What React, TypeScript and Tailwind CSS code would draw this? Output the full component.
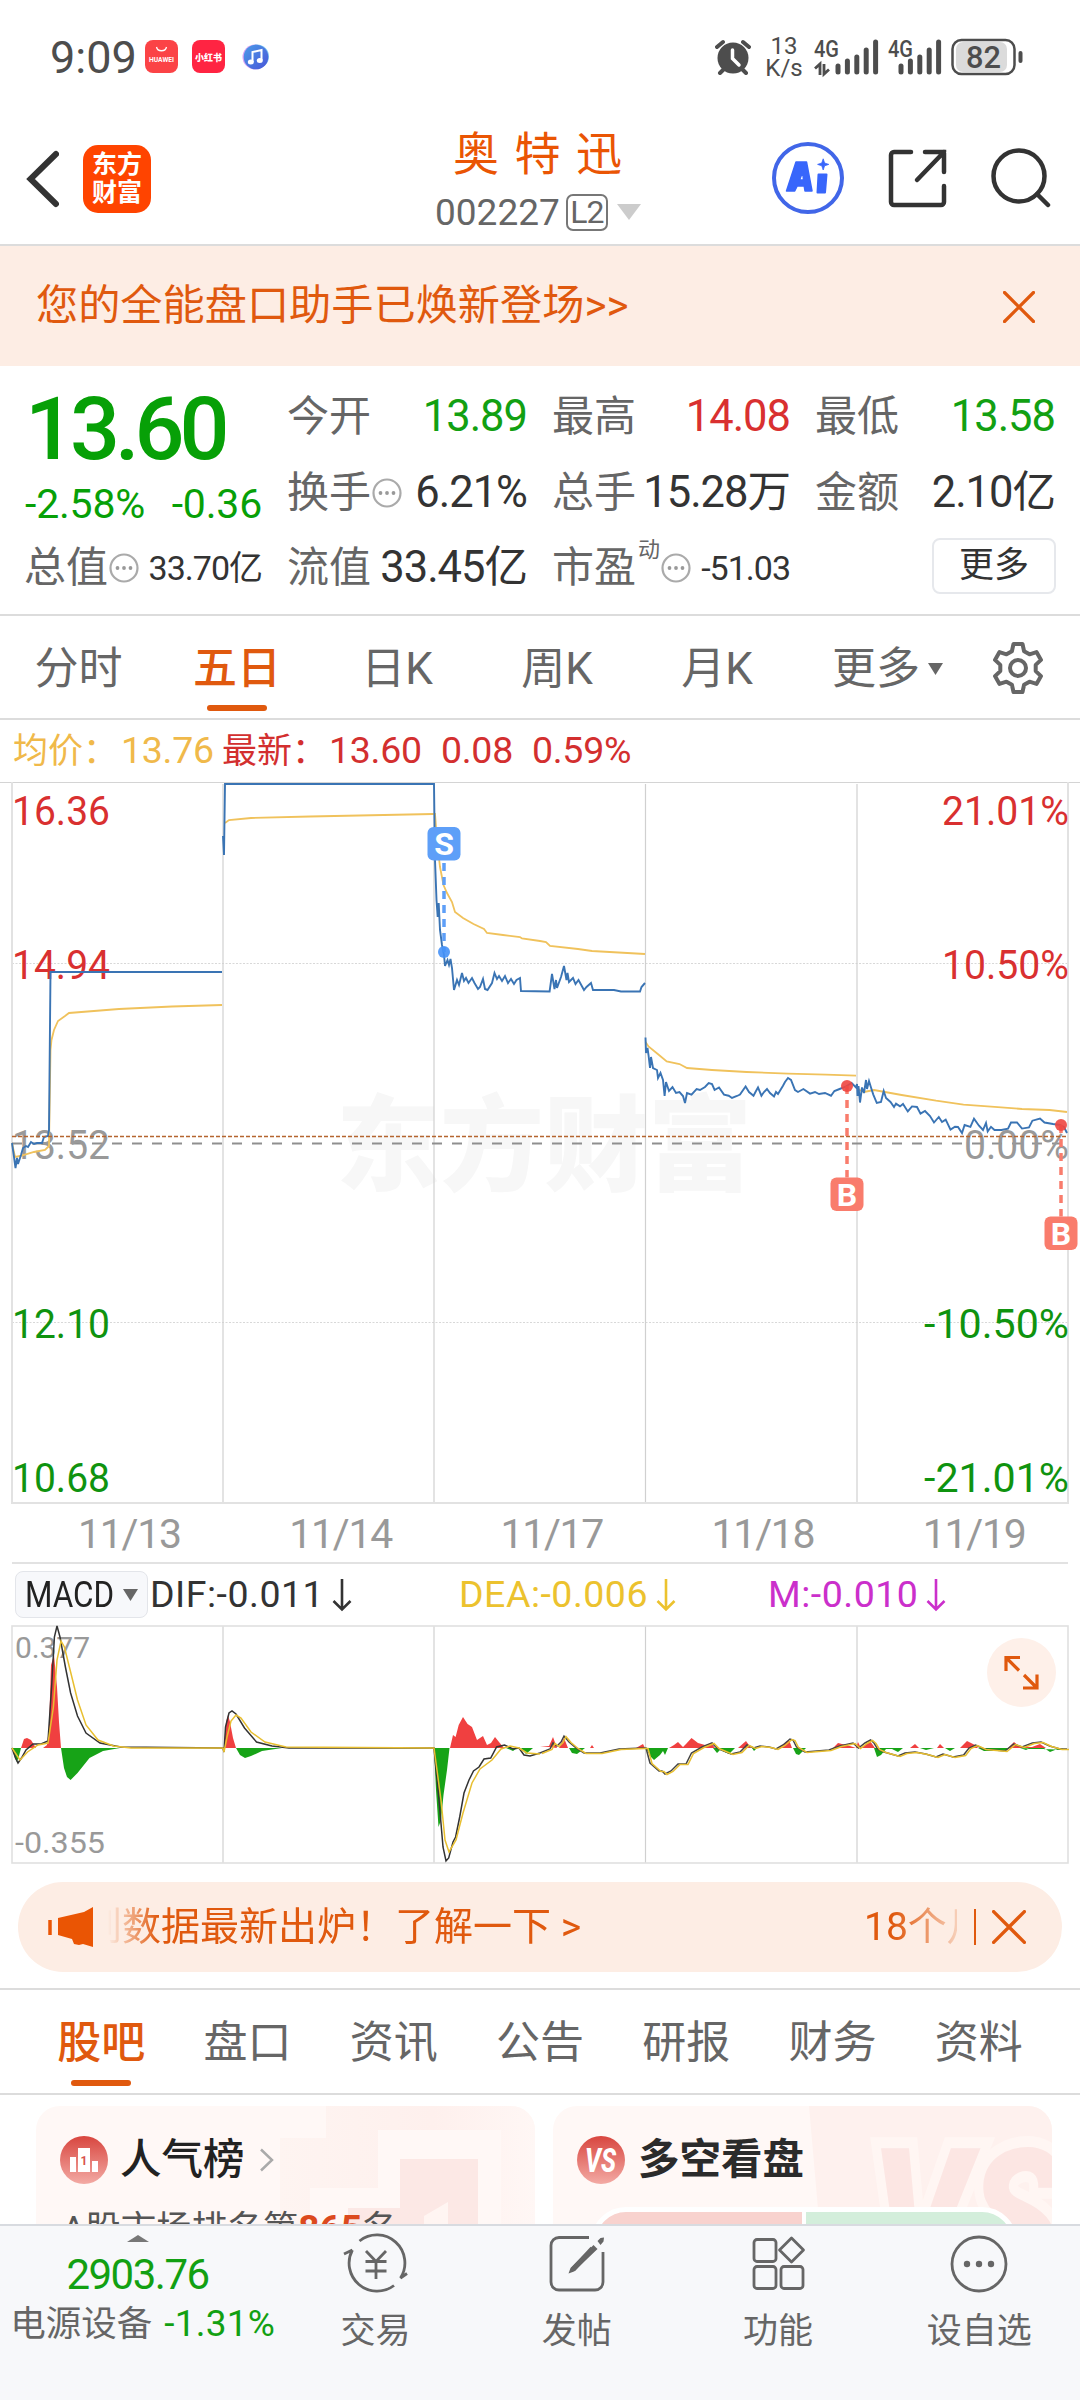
import type { ReactNode } from 'react';
import clsx from 'clsx';

const DAYS = ['11/13', '11/14', '11/17', '11/18', '11/19'];
const GRID_X = [223, 434, 645.5, 857];

const PRICE = [
  '12,1143 14,1157 15.5,1168 17,1158 18,1164 21,1155 23,1148 26,1146 28,1147 31,1142 34,1144 37,1143 42,1143 44,1137 48,1136 49,1130 50.5,972 222,972',
  '223,836 224,855 225,784 434,784 435,860 436.5,900 437.7,917 438.7,903 440,930 442,945 444,955 445,966 447.5,960 449,965 450.5,959 452,968 454,990 457,980 459,985 462,973 464,981 466,978 468.5,983 472,978 474.5,983 478,989 480,987 483,979 485,989 487.5,990 492,983 494.5,973 497,979 499,976 502,981 505,976 508,983 511,979 514,984 516.5,980 520,978 521,991 549.6,991.5 552,974 554.5,989 556,980 557,988 561,977 564,966 566.5,980 567.5,973 569,982 573,978 575.5,984 578.5,980 584,990 586.5,987 591,983 593,990 602,990 614,990 621,991.5 640,991.5 641.5,987 645,983',
  '645.5,1037.5 646,1053 647.5,1048 648.5,1055 650,1068 651,1057 653,1068 657,1070 658,1078 660.5,1073 663,1080 664.6,1096 666,1082 669,1091 672.5,1087 676,1093 679.5,1092 683,1096 685,1103 687,1093 691.5,1094.6 696.6,1089 700,1090 705,1087 708.7,1083 712,1084 714.6,1090 719,1087.5 724,1094.6 728.7,1095.7 732,1098 737,1096 740,1094.6 745.6,1086.4 749,1092 753.5,1095.7 756,1091 758,1087.5 761.4,1095.7 764,1092 767,1089 770,1093 774,1096.4 776,1092 778,1094 783,1085.7 785,1082 788,1078 791,1080 795,1090 798,1092 803.4,1089 810,1093.6 815,1092 819,1094 825,1093 831,1095.7 834.4,1091 839.6,1089 845,1087 851.6,1083 856,1087.5 857,1084 857.5,1096 858.5,1086 860,1102.5 862,1087.5 864,1093 866,1080 867,1089 869,1081 871,1087.5 873.3,1094.6 876.8,1103 881,1102 883.7,1091 886,1098 890.5,1102 894,1107 896,1103.6 900,1106.4 903,1104 907.8,1111.4 912,1106.4 917,1107 920.5,1113.6 925,1111 930,1116 934,1122.5 938.8,1117 942,1122 945.7,1119.6 950.5,1129.6 955,1126.8 958,1127 962,1133 964.6,1125 970.4,1126.8 974,1118.6 979,1125.7 983,1130 986,1123 987.7,1131.4 991,1126.8 994.5,1130 1001.4,1130 1008,1128.6 1011,1122.5 1017,1122.5 1022,1128.6 1029,1127.5 1032.4,1120.7 1040,1118.6 1044.5,1122.5 1053,1124 1060,1125 1064,1127 1067,1133',
];

const AVERAGE = [
  '12,1143 15,1157 20,1156 34,1152 45,1150 49,1146 50.5,1050 51.5,1040 54,1030 58,1021 65,1016 69,1013 119,1009 172,1006.5 222,1005',
  '225,823 229,820 251,818 310,816.5 433,814 435,814 437,840 440,867 443.5,885 447,893 452,902 455,912 463,918 473.5,924 484,929 487,933 503,935 520,937 522,938.5 540,941 546,942 550,946 578,949 592,951 645,954',
  '645.5,1042 648.5,1046.5 659,1055 666.7,1061.5 679.5,1064 687,1068 712,1070 746.6,1072 788,1073.6 826,1074.6 856,1075.7',
  '857.5,1089 864,1092 874,1090 901.6,1095 936,1100.7 963.5,1104.6 994.5,1106.8 1022,1109 1049.6,1110 1067,1112',
];

const DIF_HEAD =
  '12,1748 15.5,1758 18,1763 21.5,1758 26,1750 33,1744 41,1744 48,1741 51.6,1687 54.4,1637 57,1626 60,1637 65.4,1667 70.6,1693 77.5,1716 86,1733 100,1743 120.5,1747 223,1748 224,1752 225.5,1727 229,1713 232,1711 236,1714 244.5,1728 256.5,1742 272,1746 289,1748 434,1748 439,1800 443,1847 446,1861 448.7,1858 453,1842 455.6,1837 459.7,1817 464,1793 469,1780 473.5,1771 479,1767 484,1759 490.7,1758 496.6,1747 504.5,1745 513,1749 519,1748 524,1755 530,1756 540,1753';
const DEA_HEAD =
  '12,1748 20,1760 27.5,1752 38,1745 48,1743 53.4,1707 57,1660 61,1641 64.4,1647 70.6,1672 77.5,1700 86,1725 98,1740 113.6,1746 131,1748 223,1748 224,1752 227,1737 231,1721 236,1715 241,1718 251,1732 265,1742 286,1747 434,1748 441,1800 445,1840 449,1852 456,1840 463,1813 472,1783 480,1769 492,1760 501,1749 510,1746 519,1748 527,1753 540,1754';
const MACD_TAIL =
  '540,1753 550,1749 553,1743 557,1746 561,1742 564,1736 569,1742 576,1748 584,1753 600,1753 619,1749 643,1748 646,1748 650,1763 659,1771 662,1771 665,1774 671,1771 678,1764 686,1764 691.5,1753 702,1747 712,1743 717,1748 731,1754 740,1752 747,1745 753.5,1748 760,1746 769,1747 776,1749 783,1745 790,1739 793,1740 796.5,1747 805,1752 829,1750 839.6,1746 853,1743 858.5,1748 865,1743 870.6,1740 874,1743 877.5,1749 884,1752 891,1754 898,1756 905,1753 915,1752 925.7,1754 936,1757 943,1754 953,1757 963.6,1755 969,1748 975.6,1745 984,1749 1005,1751 1013.5,1744 1022,1747 1032.4,1743 1041,1742 1049.6,1746 1060,1749 1067,1749';

const RED_AREAS = [
  '21,1748 24,1739 27,1738 31,1740 36,1748',
  '43,1748 47,1745 49,1728 51,1665 54,1655 57,1687 59,1722 61,1748',
  '224,1748 226,1722 228,1715 230,1722 233,1738 236,1748',
  '450,1748 453,1735 455.6,1737 458.7,1725 463,1717 467.6,1724 472,1727 477,1740 483,1736 487,1745 491,1743 495,1737 499,1742 504,1748',
  '540,1746 549,1746 553,1737 557,1748',
  '559,1748 564,1738 568,1748',
  '590,1748 592,1745 594,1748',
  '636,1748 643,1744 645,1748',
  '669,1748 674,1745 678,1742 683,1747 686,1744 691.5,1738 698,1743 705,1745 712,1744 715,1748',
  '738,1748 746,1741 751,1748',
  '779,1748 785,1743 789,1740 792,1748',
  '833,1748 838,1743 850,1746 856,1748 858,1742 861,1748 870,1741 875,1748',
  '910,1748 915,1744 919,1748',
  '937,1748 940,1744 944,1748',
  '960,1748 967,1741 975,1745 978,1748',
  '1008,1748 1014,1742 1020,1747 1032,1747 1040,1744 1046,1748',
];
const GREEN_AREAS = [
  '12,1748 15,1758 17,1762 19,1756 21,1748',
  '61,1748 64,1768 67,1777 70.6,1780 77.5,1773 89.5,1758 103,1751 120,1748',
  '236,1748 240,1755 245,1758 251,1756 262,1751 282,1748',
  '434,1748 436,1790 438.5,1827 441,1820 443.5,1795 447,1770 449.5,1748',
  '506,1748 513,1751 517,1748 521,1748 526,1754 533,1748',
  '569,1748 572,1753 577,1754 585,1748',
  '646,1748 650,1756 654,1760 660,1755 663,1751 665,1755 668,1748',
  '713,1748 717,1753 720,1750 729,1754 735,1748',
  '752,1748 754,1751 757,1748',
  '793,1748 796,1754 799,1755 806,1748',
  '874,1748 877,1757 881,1755 886,1749 892,1749 898,1752 903,1748',
  '920,1748 926,1750 934,1748 945,1748 950,1751 955,1748',
  '978,1748 984,1751 1004,1751 1010,1748',
  '1020,1748 1026,1750 1030,1748 1044,1748 1050,1752 1060,1748 1067,1750',
];

function Signal({ data }: { data?: boolean }) {
  const first = data ? 24 : 13;
  return (
    <svg className="h-9 w-[68px] overflow-visible" viewBox="0 0 68 36">
      <text x="0" y="18" fontSize="23" fontWeight="500" textLength="25" lengthAdjust="spacingAndGlyphs" fill="#4d4d4d">4G</text>
      {data && <path d="M6 36V25l-5 4.5M10 25v10l5-4.5" fill="none" stroke="#4d4d4d" strokeWidth="2.8" />}
      {[27, 22, 18, 11, 3].map((top, i) => (
        <path key={top} d={`M${first + i * 9.4} ${top}V33`} stroke="#4d4d4d" strokeWidth="5" strokeLinecap="round" />
      ))}
    </svg>
  );
}

function StatusBar() {
  return (
    <div className="flex h-[112px] items-center pt-[2px] pl-[50px] text-[#4d4d4d]">
      <span className="w-[95px] text-[45px] leading-none font-normal">9:09</span>
      <svg className="h-[34px] w-[34px]" viewBox="0 0 34 34">
        <rect width="33" height="33" rx="8" fill="#fb4346" />
        <path d="M11.500 7c1 5 9 5 10 0" fill="none" stroke="#fff" strokeWidth="1.300" />
        <text x="4" y="21.500" fontSize="6.500" fontWeight="700" fill="#fff" textLength="25" lengthAdjust="spacingAndGlyphs">HUAWEI</text>
      </svg>
      <svg className="ml-[13px] h-[34px] w-[34px]" viewBox="0 0 34 34">
        <rect width="33" height="33" rx="8" fill="#ff2442" />
        <text x="3" y="20.500" fontSize="9.500" fontWeight="900" fill="#fff" textLength="27" lengthAdjust="spacingAndGlyphs">小红书</text>
      </svg>
      <svg className="ml-4 h-7 w-7" viewBox="0 0 28 28">
        <defs>
          <linearGradient id="music" x1="0" x2="1" y1="0" y2="1">
            <stop offset="0" stopColor="#4a9be8" />
            <stop offset="1" stopColor="#4a55d8" />
          </linearGradient>
        </defs>
        <circle cx="13" cy="14" r="12.500" fill="#d9a3f3" />
        <circle cx="15" cy="13.500" r="12" fill="#7cc6f2" />
        <circle cx="14" cy="14" r="12.300" fill="url(#music)" />
        <path d="M10.500 19V9l9-2v10" fill="none" stroke="#fff" strokeWidth="2" />
        <ellipse cx="8.800" cy="19" rx="3" ry="2.500" fill="#fff" />
        <ellipse cx="17.800" cy="17.500" rx="3" ry="2.500" fill="#fff" />
      </svg>

      <svg className="ml-[445px] h-9 w-9" viewBox="0 0 36 36">
        <circle cx="18" cy="19" r="15.500" fill="#4d4d4d" />
        <path d="M2 8l6-5M34 8l-6-5M5 34l4-4M31 34l-4-4" stroke="#4d4d4d" strokeWidth="4" strokeLinecap="round" />
        <path d="M17.500 11v8.500l6.500 6.500" fill="none" stroke="#fff" strokeWidth="3.500" strokeLinecap="round" />
      </svg>
      <div className="ml-[15px] flex w-[36px] flex-col items-center text-[24px] leading-[22px]">
        <span>13</span>
        <span>K/s</span>
      </div>
      <div className="ml-[12px]">
        <Signal data />
      </div>
      <div className="ml-[6px]">
        <Signal />
      </div>
      <svg className="-ml-[6px] h-[38px] w-[74px]" viewBox="0 0 74 38">
        <rect x="6" y="4" width="51" height="30" rx="7" fill="#dbdbdb" />
        <rect x="2.500" y="2" width="62" height="34" rx="9" fill="none" stroke="#4d4d4d" strokeWidth="2.500" />
        <path d="M70.500 15v8" stroke="#4d4d4d" strokeWidth="4" strokeLinecap="round" />
        <text x="16" y="30" fontSize="31" fontWeight="500" fill="#4d4d4d" textLength="35" lengthAdjust="spacingAndGlyphs">82</text>
      </svg>
    </div>
  );
}

function TitleBar() {
  return (
    <div className="flex h-[134px] items-start border-b-2 border-[#dcdcdc]">
      <svg className="mt-[38px] ml-[25px] h-[58px] w-[34px]" viewBox="0 0 34 58">
        <path d="M31 4L5.500 29l25.500 25" fill="none" stroke="#333" strokeWidth="6" strokeLinejoin="miter" strokeLinecap="round" />
      </svg>
      <div className="mt-[33px] ml-[24px] flex h-[68px] w-[68px] flex-col items-center justify-center rounded-[15px] bg-[#ff4400] text-[25px] leading-[28px] font-bold text-white">
        <span>东方</span>
        <span>财富</span>
      </div>
      <div className="ml-[284px] w-[207px]">
        <div className="mt-[18px] ml-[18px] text-[46px] leading-[48px] tracking-[15.500px] whitespace-nowrap text-[#ea5504]">奥特迅</div>
        <div className="mt-3 flex h-[44px] items-center text-[#666]">
          <span className="w-[131px] text-[37px] leading-none">002227</span>
          <span className="flex h-[37px] w-[42px] items-center justify-center rounded-[7px] border-2 border-[#777] text-[32px] leading-none tracking-tight">L2</span>
          <svg className="ml-[9px] h-4 w-6" viewBox="0 0 24 16">
            <path d="M0 0h24L12 16z" fill="#ccc" />
          </svg>
        </div>
      </div>
      <svg className="mt-[30px] ml-[130px] h-[72px] w-[72px]" viewBox="0 0 72 72">
        <circle cx="36" cy="36" r="34" fill="none" stroke="#4166e8" strokeWidth="4" />
        <g fill="#3866fb" stroke="#3866fb" strokeLinejoin="round">
          <path fillRule="evenodd" d="M24 20h10.500l5.500 29h-7l-.8-5h-7l-2.500 5H14.500zM27.500 38h4l-.8-8z" strokeWidth="1.500" />
          <path d="M46.500 32.500h8l-1.500 18h-7.500z" strokeWidth="2" />
          <path d="M51.200 16.800l1.400 4.200 4.200 1.400-4.200 1.400-1.400 4.200-1.400-4.200-4.200-1.400 4.200-1.400z" strokeWidth="0.800" />
        </g>
      </svg>
      <svg className="mt-[36px] ml-[44px] h-[60px] w-[60px]" viewBox="0 0 60 60">
        <path
          d="M23 4H6a3 3 0 0 0-3 3v47a3 3 0 0 0 3 3h47a3 3 0 0 0 3-3V38M37 4h19v20M56 4L29 32"
          fill="none"
          stroke="#333"
          strokeWidth="4.500"
          strokeLinecap="round"
        />
      </svg>
      <svg className="mt-[34px] ml-[41px] h-[66px] w-[62px]" viewBox="0 0 62 66">
        <circle cx="30" cy="30" r="25.500" fill="none" stroke="#333" strokeWidth="4.500" />
        <path d="M48 48l11 11" stroke="#333" strokeWidth="4.500" strokeLinecap="round" />
      </svg>
    </div>
  );
}

function Cross({ className }: { className: string }) {
  return (
    <svg className={className} viewBox="0 0 32 32">
      <path d="M1.500 1.500l29 29M30.500 1.500l-29 29" stroke="#e0590e" strokeWidth="3.200" strokeLinecap="round" />
    </svg>
  );
}

function InfoDot() {
  return (
    <svg className="mr-0.5 ml-px h-[30px] w-[30px] shrink-0" viewBox="0 0 30 30">
      <circle cx="15" cy="15" r="13.500" fill="none" stroke="#aaa" strokeWidth="2.200" />
      <g fill="#999">
        <circle cx="8.500" cy="15" r="1.900" />
        <circle cx="15" cy="15" r="1.900" />
        <circle cx="21.500" cy="15" r="1.900" />
      </g>
    </svg>
  );
}

interface StatProps {
  label: string;
  value: string;
  className?: string;
  sup?: string;
  info?: boolean;
}

function Stat({ label, value, className = 'text-[#333] text-[43.500px]', sup, info }: StatProps) {
  return (
    <div className="flex items-center justify-between leading-none whitespace-nowrap">
      <span className="-ml-px flex items-center text-[42px] leading-none text-[#666]">
        {label}
        {sup && <span className="mb-9 ml-0.5 text-[22px] leading-none">{sup}</span>}
        {info && <InfoDot />}
      </span>
      <span className={clsx('leading-none tracking-[-1px]', className)}>{value}</span>
    </div>
  );
}

function Quote() {
  return (
    <div className="grid h-[250px] grid-cols-[237px_239px_237px_239px] grid-rows-[76px_75px_75px] gap-x-[26px] border-b-2 border-[#dcdcdc] pt-[13px] pl-[25px] text-[#333]">
      <div className="row-span-2 text-[#07a007]">
        <div className="flex h-[100px] items-center text-[88px] leading-none font-medium tracking-[-5px]">13.60</div>
        <div className="flex h-[51px] items-center justify-between text-[41px] leading-none tracking-[-0.200px]">
          <span>-2.58%</span>
          <span>-0.36</span>
        </div>
      </div>
      <Stat label="今开" value="13.89" className="text-[43.500px] text-[#12a012]" />
      <Stat label="最高" value="14.08" className="text-[43.500px] text-[#d93030]" />
      <Stat label="最低" value="13.58" className="text-[43.500px] text-[#12a012]" />
      <Stat label="换手" value="6.21%" info />
      <Stat label="总手" value="15.28万" />
      <Stat label="金额" value="2.10亿" />
      <Stat label="总值" value="33.70亿" className="text-[34px]" info />
      <Stat label="流值" value="33.45亿" />
      <Stat label="市盈" value="-51.03" className="text-[34px]" sup="动" info />
      <div className="-mr-px flex items-center justify-end pb-1">
        <span className="flex h-[56px] w-[124px] items-center justify-center rounded-[8px] border-2 border-[#e6e8ec] text-[35px] leading-none">更多</span>
      </div>
    </div>
  );
}

function Tab({ children, active, className }: { children: ReactNode; active?: boolean; className: string }) {
  return (
    <div className={clsx('relative flex h-full items-center justify-center pt-[3px] text-[44px] leading-none', className, active ? 'text-[#e0590e]' : 'text-[#666]')}>
      {children}
      {active && <span className="absolute bottom-[7px] left-1/2 h-[6px] w-[60px] -translate-x-1/2 rounded-full bg-[#e0590e]" />}
    </div>
  );
}

function PeriodTabs() {
  return (
    <div className="flex h-[104px] items-center border-b-2 border-[#dcdcdc]">
      <Tab className="w-[157px]">分时</Tab>
      <Tab className="w-[160px] font-medium" active>五日</Tab>
      <Tab className="w-[160px]">日K</Tab>
      <Tab className="w-[160px]">周K</Tab>
      <Tab className="w-[160px]">月K</Tab>
      <Tab className="w-[181px]">
        更多
        <svg className="ml-2 h-3 w-[15px]" viewBox="0 0 15 12">
          <path d="M0 0h15L7.500 12z" fill="#666" />
        </svg>
      </Tab>
      <svg className="mt-0.5 ml-[12px] h-[56px] w-[56px]" viewBox="0 0 56 56">
        <path
          d="M23.500 4h9l1.600 7.200 5.400 3.100 7-2.200 4.500 7.800-5.300 5v6.200l5.300 5-4.500 7.800-7-2.200-5.400 3.100L32.500 52h-9l-1.600-7.200-5.400-3.100-7 2.200L5 36.100l5.300-5v-6.200l-5.300-5 4.500-7.800 7 2.200 5.400-3.100z"
          fill="none"
          stroke="#666"
          strokeWidth="4"
          strokeLinejoin="round"
        />
        <circle cx="28" cy="28" r="8" fill="none" stroke="#666" strokeWidth="4" />
      </svg>
    </div>
  );
}

function Marker({ x, dot, top, kind }: { x: number; dot: number; top: number; kind: 'S' | 'B' }) {
  const sell = kind === 'S';
  const color = sell ? '#5e9ff8' : '#f97c6c';
  return (
    <g>
      <path d={sell ? `M${x} ${top + 36}V${dot}` : `M${x} ${dot}V${top}`} stroke={color} strokeWidth="3.500" strokeDasharray="8 6" />
      <circle cx={x} cy={dot} r="6" fill={sell ? '#4591f7' : '#ee4640'} opacity="0.9" />
      <rect x={x - 16.5} y={top} width="33" height="33.500" rx="6" fill={color} />
      <text x={x} y={top + 28} fontSize="32" fontWeight="700" fill="#fff" textAnchor="middle">{kind}</text>
    </g>
  );
}

function PriceChart() {
  const labels = [
    { y: 825, price: '16.36', pct: '21.01%', len: 127, fill: '#d93030' },
    { y: 979, price: '14.94', pct: '10.50%', len: 127, fill: '#d93030' },
    { y: 1159, price: '13.52', pct: '0.00%', len: 105, fill: '#999' },
    { y: 1338, price: '12.10', pct: '-10.50%', len: 145, fill: '#0f930f' },
    { y: 1492, price: '10.68', pct: '-21.01%', len: 145, fill: '#0f930f' },
  ];
  return (
    <svg className="block h-[782px] w-full" viewBox="0 782 1080 782">
      <text x="336" y="1183" fontSize="104" fontWeight="900" fill="#f7f7f7" textLength="416" lengthAdjust="spacingAndGlyphs">东方财富</text>
      <path d="M0 782.500H1080" stroke="#d4d4d4" />
      <path d="M12 963.500H1068M12 1322.500H1068" stroke="#d8d8d8" strokeDasharray="2 1.500" />
      {GRID_X.map(x => (
        <path key={x} d={`M${x} 784V1503`} stroke="#d0d0d0" strokeWidth="1.200" />
      ))}
      <path d="M12 782V1503H1068V782" fill="none" stroke="#e2e2e2" strokeWidth="2" />
      <path d="M12 1143.500H1068" stroke="#8f8f8f" strokeWidth="1.800" strokeDasharray="10 10" />
      {labels.map(l => (
        <g key={l.price} fill={l.fill} fontSize="41">
          <text x="12" y={l.y} textLength="98" lengthAdjust="spacingAndGlyphs">{l.price}</text>
          <text x={1069 - l.len} y={l.y} textLength={l.len} lengthAdjust="spacingAndGlyphs">{l.pct}</text>
        </g>
      ))}
      {AVERAGE.map(points => (
        <polyline key={points} points={points} fill="none" stroke="#f0c25c" strokeWidth="1.800" />
      ))}
      {PRICE.map(points => (
        <polyline key={points} points={points} fill="none" stroke="#3a74b4" strokeWidth="1.900" />
      ))}
      <path d="M12 1136.500H1068" stroke="#b5652f" strokeWidth="1.300" strokeDasharray="4 2" />
      <Marker x={444} dot={952} top={827} kind="S" />
      <Marker x={847} dot={1086} top={1177.5} kind="B" />
      <Marker x={1061} dot={1125} top={1216.5} kind="B" />
      {DAYS.map((day, i) => (
        <text key={day} x={130 + i * 211.2} y="1548" fontSize="41" fill="#999" textAnchor="middle" textLength="104">{day}</text>
      ))}
      <path d="M12 1563H1068" stroke="#e2e2e2" strokeWidth="2" />
    </svg>
  );
}

function Indicator({ children, className, arrow }: { children: string; className: string; arrow: string }) {
  return (
    <span className={clsx('flex items-center text-[37.500px] leading-none tracking-[0.500px]', className)}>
      {children}
      <svg className="ml-2 h-[34px] w-5" viewBox="0 0 20 34">
        <path d="M10 1v30M1.500 23L10 31.500l8.500-8.500" fill="none" stroke={arrow} strokeWidth="2.600" />
      </svg>
    </span>
  );
}

function MacdChart() {
  return (
    <div className="relative">
      <svg className="block h-[240px] w-full" viewBox="0 1625 1080 240">
        {GRID_X.map(x => (
          <path key={x} d={`M${x} 1626V1863`} stroke="#d0d0d0" strokeWidth="1.200" />
        ))}
        <rect x="12" y="1626" width="1056" height="237" fill="none" stroke="#e0e0e0" strokeWidth="1.600" />
        {RED_AREAS.map(p => (
          <polygon key={p} points={p} fill="#f04040" />
        ))}
        {GREEN_AREAS.map(p => (
          <polygon key={p} points={p} fill="#17a317" />
        ))}
        <g fontSize="30" fill="#999">
          <text x="15" y="1657.500" textLength="75">0.377</text>
          <text x="15" y="1852.500" textLength="90" lengthAdjust="spacingAndGlyphs">-0.355</text>
        </g>
        <g fill="none" strokeWidth="1.500">
          <polyline points={DIF_HEAD} stroke="#333" />
          <polyline points={MACD_TAIL} stroke="#444" />
          <polyline points={DEA_HEAD} stroke="#e8bf30" />
          <polyline points={MACD_TAIL} stroke="#e8bf30" transform="translate(2 0.500)" />
        </g>
      </svg>
      <div className="absolute top-[13px] right-[24px] flex h-[69px] w-[69px] items-center justify-center rounded-full bg-[#fef0e9]">
        <svg className="h-[35px] w-[35px]" viewBox="0 0 35 35">
          <path d="M2 16V2.500h14M2 2.500l13 13M33 19.500V33H19M33 33L20 20" fill="none" stroke="#e0590e" strokeWidth="3.200" />
        </svg>
      </div>
    </div>
  );
}

function Charts() {
  return (
    <>
      <div className="flex h-[62px] items-center pl-[13px] text-[35px] leading-none whitespace-nowrap text-[#d32f2f]">
        <span className="w-[108px] text-[#f0b94a]">均价：</span>
        <span className="w-[101px] text-[37.500px] tracking-[-0.300px] text-[#f0b94a]">13.76</span>
        <span className="w-[107px]">最新：</span>
        <span className="w-[112px] text-[37.500px] tracking-[-0.300px]">13.60</span>
        <span className="w-[91px] text-[37.500px] tracking-[-0.300px]">0.08</span>
        <span className="text-[37.500px] tracking-[-0.300px]">0.59%</span>
      </div>
      <PriceChart />
      <div className="flex h-[61px] items-center whitespace-nowrap">
        <div className="ml-[15px] flex h-[47px] w-[133px] items-center rounded-[8px] border border-[#e3e5ea] bg-[#f7f8fb] pl-[9px]">
          <span className="w-[98px] origin-left scale-x-[0.850] text-[37px] leading-none text-[#222]">MACD</span>
          <svg className="h-3 w-[15px]" viewBox="0 0 15 12">
            <path d="M0 0h15L7.500 12z" fill="#666" />
          </svg>
        </div>
        <Indicator className="ml-[2px] w-[309px] text-[#333]" arrow="#333">DIF:-0.011</Indicator>
        <Indicator className="w-[309px] text-[#ecc22e]" arrow="#ecc22e">DEA:-0.006</Indicator>
        <Indicator className="text-[#cb2fcb]" arrow="#cb2fcb">M:-0.010</Indicator>
      </div>
      <MacdChart />
    </>
  );
}

function Notice() {
  return (
    <div className="mx-[18px] mt-[17px] flex h-[90px] items-center rounded-full bg-[#fdede4] text-[39px] leading-none text-[#e0590e]">
      <svg className="ml-[30px] h-10 w-[46px]" viewBox="0 0 46 40">
        <path d="M45 0v40l-10-3-4 1-5-1-2-5-14-4V11L36 5z" fill="#ea5504" />
        <path d="M2 13v15" stroke="#ea5504" strokeWidth="3.500" />
      </svg>
      <div className="ml-[14px] flex h-[60px] w-[849px] items-center overflow-hidden whitespace-nowrap [mask-image:linear-gradient(90deg,transparent,#000_50px,#000_785px,transparent_865px)]">
        <span className="-ml-[25px] w-[781px] shrink-0">到数据最新出炉！了解一下 &gt;</span>
        <span className="shrink-0">18个月</span>
      </div>
      <span className="ml-[17px] h-9 w-0.5 bg-[#e0590e]" />
      <Cross className="ml-[16px] h-[34px] w-[34px]" />
    </div>
  );
}

function Cards() {
  return (
    <div className="flex h-[129px] gap-[18px] overflow-hidden px-[36px] pt-[11px]">
      <div className="relative h-[160px] w-[499px] shrink-0 overflow-hidden rounded-[24px] bg-[#fff8f6]">
        <svg className="absolute inset-0 h-[160px] w-[499px]" viewBox="0 0 499 160">
          <defs>
            <linearGradient id="podium" x1="0" x2="1" y1="0" y2="0">
              <stop offset="0" stopColor="#fef4f1" />
              <stop offset="0.600" stopColor="#fef0ed" />
              <stop offset="1" stopColor="#fff7f5" />
            </linearGradient>
          </defs>
          <path d="M290 0H499V160H244V32H290z" fill="url(#podium)" />
          <path d="M342 24H465V160H274V82H342z" fill="#fff8f6" />
          <path d="M364 53H442V160H312V102H364z" fill="#fce8e5" />
          <path d="M388 110l24-14v64h-16v-42l-8 4z" fill="#fff5f2" />
        </svg>
        <div className="relative flex h-[108px] items-center pl-[24px]">
          <svg className="h-[48px] w-[48px]" viewBox="0 0 48 48">
            <defs>
              <linearGradient id="badge" x1="0" x2="0" y1="0" y2="1">
                <stop offset="0" stopColor="#d8463f" />
                <stop offset="1" stopColor="#f3aaa4" />
              </linearGradient>
            </defs>
            <circle cx="24" cy="24" r="24" fill="url(#badge)" />
            <path d="M10 21h6v15h-6zM18 12h12v24H18zM32 25h6v11h-6z" fill="#fff" />
            <text x="24" y="28.500" fontSize="12" fontWeight="700" fill="#d9534c" textAnchor="middle">1</text>
          </svg>
          <span className="ml-[12px] text-[41.500px] leading-none font-medium text-[#222]">人气榜</span>
          <svg className="ml-[14px] h-6 w-4" viewBox="0 0 16 24">
            <path d="M2 1.500l11 10.500L2 22.500" fill="none" stroke="#aaa" strokeWidth="2.500" />
          </svg>
        </div>
        <div className="relative -mt-[7px] pl-[26px] text-[35.500px] leading-[44px] whitespace-nowrap text-[#555]">
          A股市场排名第<b className="text-[37px] leading-none text-[#dc4a1e]">865</b>名
        </div>
      </div>
      <div className="relative h-[160px] w-[499px] shrink-0 overflow-hidden rounded-[24px] bg-[#fff8f6]">
        <svg className="absolute inset-0 h-[160px] w-[499px]" viewBox="0 0 499 160">
          <path d="M256 0H499V160H270z" fill="#fef1ee" />
          <text x="318" y="174" fontSize="185" fontWeight="900" fontStyle="italic" fill="#fce6e3" stroke="#fff6f3" strokeWidth="22" paintOrder="stroke" textLength="192" lengthAdjust="spacingAndGlyphs">VS</text>
        </svg>
        <div className="relative flex h-[108px] items-center pl-[24px]">
          <svg className="h-[48px] w-[48px]" viewBox="0 0 48 48">
            <circle cx="24" cy="24" r="24" fill="url(#badge)" />
            <text x="8" y="36" fontSize="33" fontWeight="800" fontStyle="italic" fill="#fff" textLength="31" lengthAdjust="spacingAndGlyphs">VS</text>
          </svg>
          <span className="ml-[13px] text-[41.500px] leading-none font-bold text-[#2b2b2b]">多空看盘</span>
        </div>
        <div className="relative -mt-[7px] ml-[38px] flex w-[426px] gap-1 rounded-full border-[5px] border-white bg-white">
          <div className="h-[60px] flex-1 rounded-l-full bg-[#f8d2ce]" />
          <div className="h-[60px] flex-1 rounded-r-full bg-[#d3eedb]" />
        </div>
      </div>
    </div>
  );
}

function NavItem({ label, children }: { label: string; children: ReactNode }) {
  return (
    <div className="flex flex-1 flex-col items-center pt-[4px]">
      <svg className="h-[68px] w-[68px]" viewBox="-34 -34 68 68" fill="none" stroke="#666" strokeWidth="2.800">
        {children}
      </svg>
      <span className="mt-[14px] text-[35px] leading-[40px] text-[#666]">{label}</span>
    </div>
  );
}

function BottomBar() {
  return (
    <div className="flex h-[178px] border-t-2 border-[#d8dbe0] bg-[#f7f8fa]">
      <div className="flex w-[275px] flex-col items-center">
        <svg className="mt-[9px] h-[7px] w-[22px]" viewBox="0 0 22 7">
          <path d="M0 7L11 0l11 7z" fill="#777" />
        </svg>
        <span className="mt-[12px] text-[42px] leading-[42px] tracking-[-1.500px] text-[#12a012]">2903.76</span>
        <div className="mt-[6px] flex items-center self-end text-[35.500px] leading-[44px] whitespace-nowrap text-[#666]">
          电源设备
          <span className="ml-[12px] text-[37px] tracking-[0.200px] text-[#12a012]">-1.31%</span>
        </div>
      </div>
      <NavItem label="交易">
        <path d="M-16.500 -23A28 28 0 0 1 24.500 14L31 9.500M-23.600 -14A28 28 0 0 0 18 21.500M-23.600 -14L-32 -10" />
        <path d="M-10 -13L0 -2.500L10 -13M0 -2.500V15M-10.500 -2.500H10.500M-10.500 7H10.500" />
      </NavItem>
      <NavItem label="发帖">
        <path d="M12 -26.500H-18a8 8 0 0 0 -8 8V18a8 8 0 0 0 8 8H18a8 8 0 0 0 8 -8V-12" />
        <path d="M16.500 -19L20.500 -15L-3 7.500L-8.500 9.500L-6.500 4zM20.500 -23L23.500 -26L27 -26.500L26.500 -22.500L23.500 -19z" fill="#666" stroke="none" />
        <path d="M15.500 -15.500L-4 5.500" strokeWidth="5" />
      </NavItem>
      <NavItem label="功能">
        <rect x="-24" y="-24.500" width="22" height="22" rx="3" />
        <rect x="-24" y="2.500" width="22" height="22" rx="3" />
        <rect x="3" y="2.500" width="22" height="22" rx="3" />
        <path d="M13.500 -26L25.500 -14L13.500 -2L1.500 -14z" strokeLinejoin="round" />
      </NavItem>
      <NavItem label="设自选">
        <circle r="27" />
        <g fill="#666" stroke="none">
          <circle cx="-12" r="3.200" />
          <circle r="3.200" />
          <circle cx="12" r="3.200" />
        </g>
      </NavItem>
    </div>
  );
}

export default function App() {
  return (
    <div className="h-[2400px] w-[1080px] overflow-hidden bg-white font-['Roboto','Noto_Sans_CJK_SC',sans-serif]">
      <StatusBar />
      <TitleBar />
      <div className="flex h-[120px] items-center bg-[#fdede4] pt-px pl-[36px] text-[42.200px] leading-none text-[#e0590e]">
        <span className="w-[967px]">您的全能盘口助手已焕新登场&gt;&gt;</span>
        <Cross className="h-8 w-8" />
      </div>
      <Quote />
      <PeriodTabs />
      <Charts />
      <Notice />
      <div className="mt-[16px] flex h-[107px] items-center border-y-2 border-[#dcdcdc] px-[28px]">
        {['股吧', '盘口', '资讯', '公告', '研报', '财务', '资料'].map((name, i) => (
          <Tab key={name} className={i === 0 ? 'flex-1 font-medium' : 'flex-1'} active={i === 0}>{name}</Tab>
        ))}
      </div>
      <Cards />
      <BottomBar />
    </div>
  );
}
